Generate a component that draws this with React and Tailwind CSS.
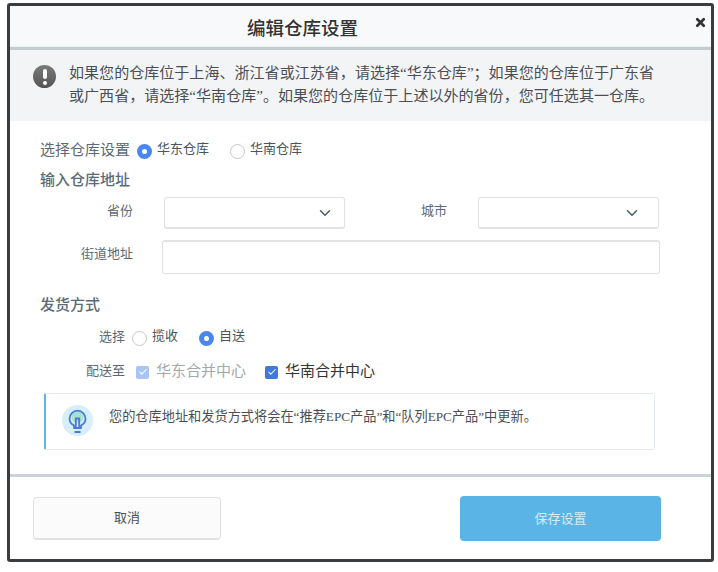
import { ChevronDown, Check, X } from "lucide-react";

const serif = "font-['Liberation_Serif','Noto_Sans_CJK_SC',serif]";
const sans = "font-['Liberation_Sans','Noto_Sans_CJK_SC',sans-serif]";

function Radio({ on, label }) {
  return (
    <span className="flex items-center gap-[5px]">
      {on ? (
        <span className="w-[15px] h-[15px] rounded-full bg-[#4a86f0] flex items-center justify-center mt-[2px]">
          <span className="w-[5px] h-[5px] rounded-full bg-white"></span>
        </span>
      ) : (
        <span className="w-[15px] h-[15px] rounded-full border border-[#c8c8c8] bg-white mt-[2px]"></span>
      )}
      <span className="text-[13px] leading-[16px] text-[#4a5560] -mt-[2px]">{label}</span>
    </span>
  );
}

function Select({ className }) {
  return (
    <div className={`${className} w-[181px] h-[32px] border border-[#e2e2e2] border-b-2 rounded-[3px] bg-white flex items-center justify-end`}>
      <ChevronDown size={18} strokeWidth={2} className="text-[#4a5a68]" />
    </div>
  );
}

function Box({ dim, label }) {
  return (
    <span className="flex items-center gap-[7px]">
      <span className={`w-[13px] h-[13px] rounded-[2px] flex items-center justify-center mt-[2px] ${dim ? "bg-[#a9c4f5]" : "bg-[#3f78e0]"}`}>
        <Check size={10} strokeWidth={2.5} className="text-white" />
      </span>
      <span className={`${sans} text-[15px] leading-[18px] ${dim ? "text-[#a3a8ac]" : "text-[#333]"}`}>{label}</span>
    </span>
  );
}

export default function App() {
  return (
    <div className={`${serif} w-[718px] h-[572px] bg-white pt-[3px] pl-[7px]`}>
      <div className="w-[707px] h-[559px] border-[3px] border-[#3a3d3f] rounded-[3px] bg-white flex flex-col">
        <div className="relative h-[40px] shrink-0 bg-[#f8f9fa] flex items-center pl-[237px] pt-[6px]">
          <h1 className={`${sans} text-[18.500px] font-medium text-[#333]`}>编辑仓库设置</h1>
          <X size={13} strokeWidth={5} className="absolute right-[4px] top-[10px] text-[#333]" />
        </div>
        <div className="h-[4px] shrink-0 bg-[#eceeef] border-b-[3px] border-[#c5ccd0]"></div>

        <div className="h-[71px] shrink-0 bg-[#f3f4f6] flex pl-[23px] pt-[12px]">
          <span className="w-[23px] h-[23px] rounded-full bg-gradient-to-b from-[#7a7a7a] to-[#555] flex flex-col items-center justify-center shrink-0 mt-[3px] gap-[2px]">
            <span className="w-[4px] h-[10px] rounded-[2px] bg-white"></span>
            <span className="w-[4px] h-[4px] rounded-full bg-white"></span>
          </span>
          <p className="ml-[13px] text-[15.060px] leading-[23px] text-[#4a4f55] w-[620px]">
            如果您的仓库位于上海、浙江省或江苏省，请选择“华东仓库”；如果您的仓库位于广东省<br />
            或广西省，请选择“华南仓库”。如果您的仓库位于上述以外的省份，您可任选其一仓库。
          </p>
        </div>

        <div className="flex-1 pl-[30px] pt-[19px] text-[#5b6a76]">
          <div className="flex items-center h-[20px]">
            <span className="text-[15px] w-[97px] mt-[1px]">选择仓库设置</span>
            <Radio on label="华东仓库" />
            <span className="w-[21px]"></span>
            <Radio label="华南仓库" />
          </div>
          <div className="text-[15px] mt-[10px] h-[21px] leading-[21px] font-medium">输入仓库地址</div>
          <div className="flex mt-[6px] items-start">
            <span className="w-[124px] pr-[31px] text-right text-[13px] leading-[28px]">省份</span>
            <Select className="pr-[10px]" />
            <span className="w-[133px] pr-[31px] text-right text-[13px] leading-[28px]">城市</span>
            <Select className="pr-[17px]" />
          </div>
          <div className="flex mt-[11px] items-start">
            <span className="w-[122px] pr-[29px] text-right text-[13px] leading-[28px]">街道地址</span>
            <div className="w-[498px] h-[34px] border border-[#e2e2e2] border-t-2 rounded-[3px]"></div>
          </div>
          <div className="text-[15px] mt-[21px] h-[21px] leading-[21px] font-medium">发货方式</div>
          <div className="flex items-center h-[20px] mt-[11px] pl-[59px]">
            <span className="text-[13px] mr-[7px]">选择</span>
            <Radio label="揽收" />
            <span className="w-[21px]"></span>
            <Radio on label="自送" />
          </div>
          <div className="flex items-center h-[20px] mt-[14px] pl-[46px]">
            <span className="text-[13px] mr-[11px]">配送至</span>
            <Box dim label="华东合并中心" />
            <span className="w-[19px]"></span>
            <Box label="华南合并中心" />
          </div>
          <div className="mt-[12px] ml-[4px] w-[611px] h-[57px] border border-[#e3e9ee] border-l-[2px] border-l-[#5bb5e8] rounded-[2px] flex pl-[16px] pt-[11px]">
            <svg width="31" height="31" viewBox="0 0 31 31" className="shrink-0">
              <circle cx="15.5" cy="15.5" r="15.5" fill="#d6effb" />
              <circle cx="15.5" cy="12" r="6" fill="#a6e3cd" />
              <path d="M12 23v-2.500c-2.800-1.500-4.500-3.700-4.500-6.800a8 8 0 0 1 16 0c0 3.100-1.700 5.300-4.500 6.800V23z" fill="none" stroke="#4a78e0" strokeWidth="1.800" strokeLinejoin="round" />
              <path d="M12.500 27h6M13.800 22v-8.500h3.400V22" fill="none" stroke="#4a78e0" strokeWidth="1.800" />
            </svg>
            <p className="ml-[16px] text-[13.200px] leading-[24px] text-[#4a4f55]">您的仓库地址和发货方式将会在“推荐EPC产品”和“队列EPC产品”中更新。</p>
          </div>
        </div>

        <div className="h-[3px] shrink-0 bg-[#ccd2da]"></div>
        <div className="h-[82px] shrink-0 pl-[23px] pr-[50px] flex justify-between items-start">
          <button className={`${sans} mt-[20px] w-[188px] h-[43px] bg-[#fbfbfb] border border-[#e2e2e2] border-b-2 rounded-[4px] text-[13px] text-[#4a4f55]`}>取消</button>
          <button className={`${sans} mt-[19px] w-[201px] h-[45px] bg-[#5ab4e6] rounded-[4px] text-[13px] text-[#d4ecf9]`}>保存设置</button>
        </div>
      </div>
    </div>
  );
}
